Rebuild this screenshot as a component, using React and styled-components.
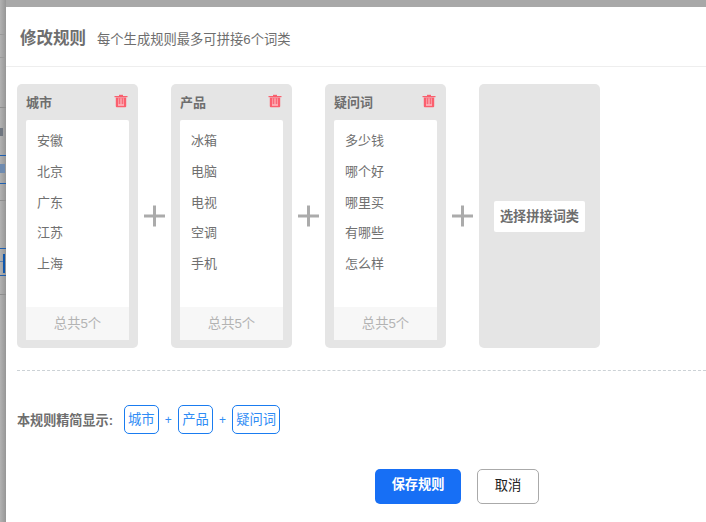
import React from 'react'
import styled, { createGlobalStyle } from 'styled-components'

const GlobalStyle = createGlobalStyle`
  html, body {
    margin: 0;
    padding: 0;
    height: 100%;
    overflow: hidden;
    background: #a8a8a8;
    font-family: "Liberation Sans", "Noto Sans CJK SC", sans-serif;
  }
`

const Page = styled.div`
  width: 706px;
  height: 522px;
  display: flex;
  overflow: hidden;
  background: linear-gradient(#a8a8a8, #a8a8a8 7px, #a6a6a6);
`

const Backdrop = styled.div`
  position: relative;
  width: 6px;
  flex-shrink: 0;
  background: linear-gradient(90deg, #b2b2b2, #969696);
`

// bits of the page under the mask, only a sliver shows
const BackLine = styled.div`
  position: absolute;
  left: 0;
  right: 0;
  top: ${props => props.top}px;
  height: 1px;
  background: ${props => props.color};
`

const BackMark = styled.div`
  position: absolute;
  left: ${props => props.left}px;
  top: ${props => props.top}px;
  width: ${props => props.w}px;
  height: ${props => props.h}px;
  background: ${props => props.color};
`

const Dialog = styled.div`
  flex: 1;
  margin-top: 7px;
  background: #fff;
  display: flex;
  flex-direction: column;
`

const Header = styled.div`
  height: 60px;
  padding: 1px 14px 0;
  box-sizing: border-box;
  display: flex;
  align-items: center;
  border-bottom: 1px solid #eeeeee;
`

const Title = styled.h2`
  margin: 0;
  font-size: 16.5px;
  font-weight: 700;
  color: #6e6e6e;
`

const Subtitle = styled.span`
  margin: 2px 0 0 11px;
  font-size: 13.3px;
  color: #6e6e6e;
`

const Body = styled.div`
  padding: 17px 0 0 11px;
`

const Columns = styled.div`
  display: flex;
  align-items: stretch;
  height: 264px;
`

const Card = styled.div`
  width: 121px;
  background: #e5e5e5;
  border-radius: 5px;
  padding: 0 9px 8px;
  box-sizing: border-box;
  display: flex;
  flex-direction: column;
`

const CardHead = styled.div`
  height: 36px;
  padding: 0 1px 2px 0;
  box-sizing: border-box;
  display: flex;
  align-items: center;
  justify-content: space-between;
`

const CardTitle = styled.span`
  font-size: 13px;
  font-weight: 700;
  color: #6e6e6e;
`

const CardInner = styled.div`
  flex: 1;
  background: #fff;
  border-radius: 2px;
  display: flex;
  flex-direction: column;
`

const WordList = styled.ul`
  flex: 1;
  margin: 0;
  padding: 6px 0 0 11px;
  list-style: none;
`

const Word = styled.li`
  height: 30.75px;
  line-height: 30px;
  font-size: 13px;
  color: #707070;
`

const CardFoot = styled.div`
  height: 33px;
  line-height: 33px;
  text-align: center;
  background: #f7f7f7;
  font-size: 13.3px;
  color: #b3b3b3;
`

const Plus = styled.div`
  width: 33px;
  display: flex;
  align-items: center;
  justify-content: center;
`

const AddCard = styled(Card)`
  align-items: center;
  justify-content: center;
  padding: 0;
`

const AddButton = styled.div`
  width: 91px;
  height: 31px;
  margin-top: 1px;
  background: #fff;
  border-radius: 2px;
  text-align: center;
  line-height: 31px;
  font-size: 13.2px;
  font-weight: 700;
  color: #6e6e6e;
`

const Divider = styled.div`
  margin-top: 22px;
  border-top: 1px dashed #ccd2d6;
`

const Summary = styled.div`
  margin-top: 34px;
  height: 29px;
  display: flex;
  align-items: center;
`

const SummaryLabel = styled.span`
  font-size: 13.1px;
  font-weight: 700;
  color: #6e6e6e;
  margin-right: 11px;
`

const Tag = styled.span`
  height: 27px;
  line-height: 27px;
  padding: 0 3px;
  border: 1px solid #1a7cf0;
  border-radius: 5px;
  font-size: 13.3px;
  color: #2f8cf5;
`

const TagPlus = styled.span`
  width: 19.5px;
  text-align: center;
  font-size: 12px;
  color: #2f8cf5;
`

const Footer = styled.div`
  margin-top: 35px;
  margin-left: 358px;
  display: flex;
  gap: 16px;
`

const SaveButton = styled.button`
  width: 86px;
  height: 35px;
  padding: 0 0 6px;
  border: none;
  border-radius: 5px;
  background: #176ff5;
  color: #fff;
  font-family: inherit;
  font-size: 13.2px;
  font-weight: 700;
`

const CancelButton = styled.button`
  width: 62px;
  height: 35px;
  padding: 0 0 4px;
  border: 1px solid #aaa;
  border-radius: 5px;
  background: #fff;
  color: #222;
  font-family: inherit;
  font-size: 13.3px;
`

const TrashIcon = () => (
  <svg width="14" height="14" viewBox="0 0 14 14">
    <rect x="0.5" y="2" width="13" height="1.2" fill="#f9606e" />
    <rect x="5" y="0.8" width="4" height="1.4" fill="#f9606e" />
    <path d="M1.8 3.4h10.4v8.8a1 1 0 0 1-1 1H2.8a1 1 0 0 1-1-1z" fill="#fb5f6e" />
    <rect x="4" y="4.2" width="6" height="6.8" fill="#fb97a1" />
    <rect x="5.2" y="4.2" width="0.8" height="6" fill="#f9606e" />
    <rect x="8" y="4.2" width="0.8" height="6" fill="#f9606e" />
    <rect x="4" y="10.6" width="6" height="1" fill="#fdd3d7" />
  </svg>
)

const PlusIcon = () => (
  <svg width="22" height="22" viewBox="0 0 22 22">
    <rect x="0" y="9.5" width="21" height="3" fill="#ababab" />
    <rect x="9" y="0.5" width="3" height="21" fill="#ababab" />
  </svg>
)

const groups = [
  { name: '城市', words: ['安徽', '北京', '广东', '江苏', '上海'] },
  { name: '产品', words: ['冰箱', '电脑', '电视', '空调', '手机'] },
  { name: '疑问词', words: ['多少钱', '哪个好', '哪里买', '有哪些', '怎么样'] },
]

const App = () => {
  return (
    <Page>
      <GlobalStyle />
      <Backdrop>
        <BackLine top={34} color="#9a9a9a" />
        <BackLine top={57} color="#9a9a9a" />
        <BackLine top={107} color="#8e8e8e" />
        <BackMark left={0} top={128} w={3} h={8} color="#6f7680" />
        <BackLine top={155} color="#1f5fae" />
        <BackMark left={0} top={164} w={5} h={9} color="#6f8bb0" />
        <BackLine top={183} color="#1f5fae" />
        <BackLine top={200} color="#8e8e8e" />
        <BackLine top={248} color="#1f5fae" />
        <BackMark left={3} top={254} w={2} h={19} color="#0f56ab" />
        <BackMark left={0} top={261} w={3} h={1} color="#5a7fae" />
        <BackLine top={275} color="#1f5fae" />
        <BackLine top={294} color="#8e8e8e" />
      </Backdrop>
      <Dialog>
        <Header>
          <Title>修改规则</Title>
          <Subtitle>每个生成规则最多可拼接6个词类</Subtitle>
        </Header>
        <Body>
          <Columns>
            {groups.map(group => (
              <React.Fragment key={group.name}>
                <Card>
                  <CardHead>
                    <CardTitle>{group.name}</CardTitle>
                    <TrashIcon />
                  </CardHead>
                  <CardInner>
                    <WordList>
                      {group.words.map(word => <Word key={word}>{word}</Word>)}
                    </WordList>
                    <CardFoot>总共5个</CardFoot>
                  </CardInner>
                </Card>
                <Plus><PlusIcon /></Plus>
              </React.Fragment>
            ))}
            <AddCard>
              <AddButton>选择拼接词类</AddButton>
            </AddCard>
          </Columns>
          <Divider />
          <Summary>
            <SummaryLabel>本规则精简显示:</SummaryLabel>
            <Tag>城市</Tag>
            <TagPlus>+</TagPlus>
            <Tag>产品</Tag>
            <TagPlus>+</TagPlus>
            <Tag>疑问词</Tag>
          </Summary>
          <Footer>
            <SaveButton>保存规则</SaveButton>
            <CancelButton>取消</CancelButton>
          </Footer>
        </Body>
      </Dialog>
    </Page>
  )
}

export default App
